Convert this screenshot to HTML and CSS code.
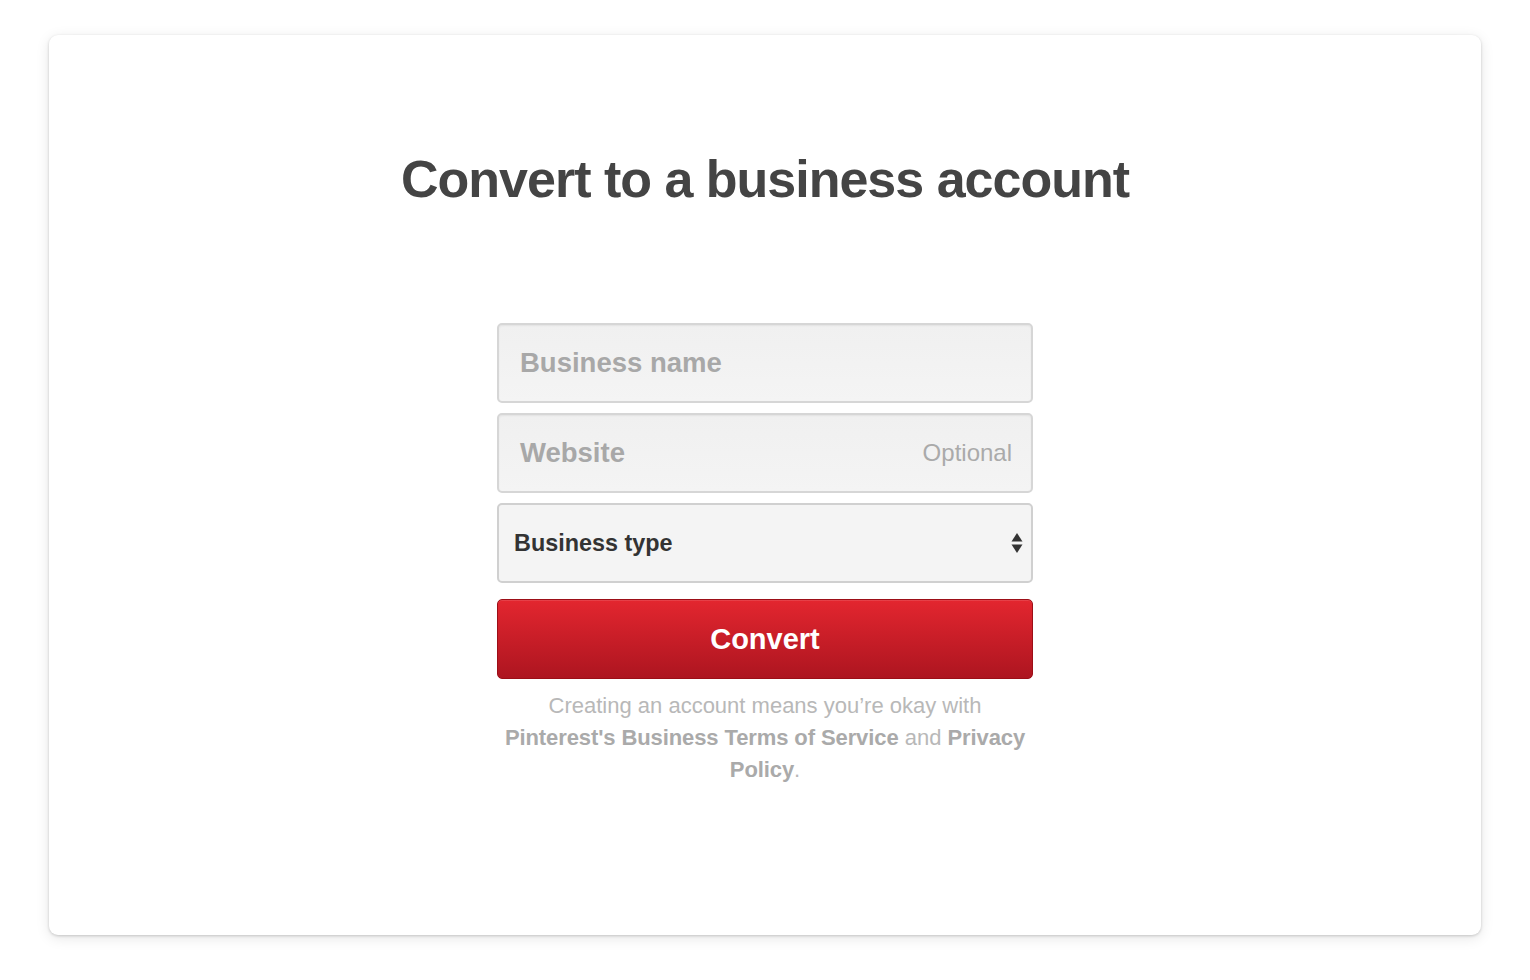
FILE: index.html
```html
<!DOCTYPE html>
<html lang="en">
<head>
<meta charset="utf-8">
<title>Convert to a business account</title>
<link rel="stylesheet" href="styles.css">
</head>
<body>
<div class="card">
  <h1 class="title">Convert to a business account</h1>
  <form class="form">
    <div class="field"><span class="placeholder">Business name</span></div>
    <div class="field"><span class="placeholder">Website</span><span class="optional">Optional</span></div>
    <div class="select">
      <span class="select-label">Business type</span>
      <svg class="arrows" width="12" height="24" viewBox="0 0 12 24"><path d="M6 2 L11.5 10.5 L0.5 10.5 Z" fill="#333"/><path d="M6 22 L11.5 13.5 L0.5 13.5 Z" fill="#333"/></svg>
    </div>
    <button type="button" class="btn">Convert</button>
    <p class="terms">Creating an account means you’re okay with<br><b>Pinterest's Business Terms of Service</b> and <b>Privacy<br>Policy</b>.</p>
  </form>
</div>
</body>
</html>
```
FILE: styles.css
```css
html, body {
  margin: 0;
  padding: 0;
  background: #ffffff;
}
body {
  padding: 35px 49px 45px;
  font-family: "Liberation Sans", Arial, Helvetica, sans-serif;
}
.card {
  height: 900px;
  box-sizing: border-box;
  background: #fff;
  border-radius: 9px;
  box-shadow: 0 1px 3px rgba(0,0,0,0.18), 0 3px 14px rgba(0,0,0,0.10);
  display: flex;
  flex-direction: column;
  align-items: center;
  padding-top: 114px;
}
.title {
  margin: 0;
  font-size: 52px;
  line-height: 60px;
  font-weight: 700;
  color: #444;
  letter-spacing: -1px;
}
.form {
  margin-top: 114px;
  width: 536px;
  display: flex;
  flex-direction: column;
}
.field, .select {
  height: 80px;
  box-sizing: border-box;
  border: 2px solid #d6d6d6;
  border-radius: 5px;
  display: flex;
  align-items: center;
  justify-content: space-between;
}
.field {
  background: linear-gradient(#f0f0f0, #f4f4f4);
  box-shadow: inset 0 1px 2px rgba(0,0,0,0.06);
  padding: 0 19px 0 21px;
  margin-bottom: 10px;
}
.placeholder {
  font-size: 27.5px;
  font-weight: 700;
  color: #a8a8a8;
}
.optional {
  font-size: 24px;
  color: #aaa;
}
.select {
  background: #f4f4f4;
  border: 2px solid #d0d0d0;
  padding: 0 8px 0 15px;
  margin-bottom: 16px;
}
.select-label {
  font-size: 23.4px;
  font-weight: 700;
  color: #333;
}
.arrows {
  display: block;
}
.btn {
  height: 80px;
  border: 1px solid #9c0e17;
  border-radius: 5px;
  background: linear-gradient(#e3262f, #ad1520);
  color: #fff;
  font-family: "Liberation Sans", Arial, sans-serif;
  font-size: 29px;
  font-weight: 700;
  padding: 0;
  box-shadow: inset 0 1px 0 rgba(255,255,255,0.12);
}
.terms {
  margin: 11px 0 0;
  text-align: center;
  font-size: 22px;
  line-height: 32px;
  color: #b8b8b8;
}
.terms b {
  color: #aaaaaa;
  letter-spacing: -0.1px;
}
```
